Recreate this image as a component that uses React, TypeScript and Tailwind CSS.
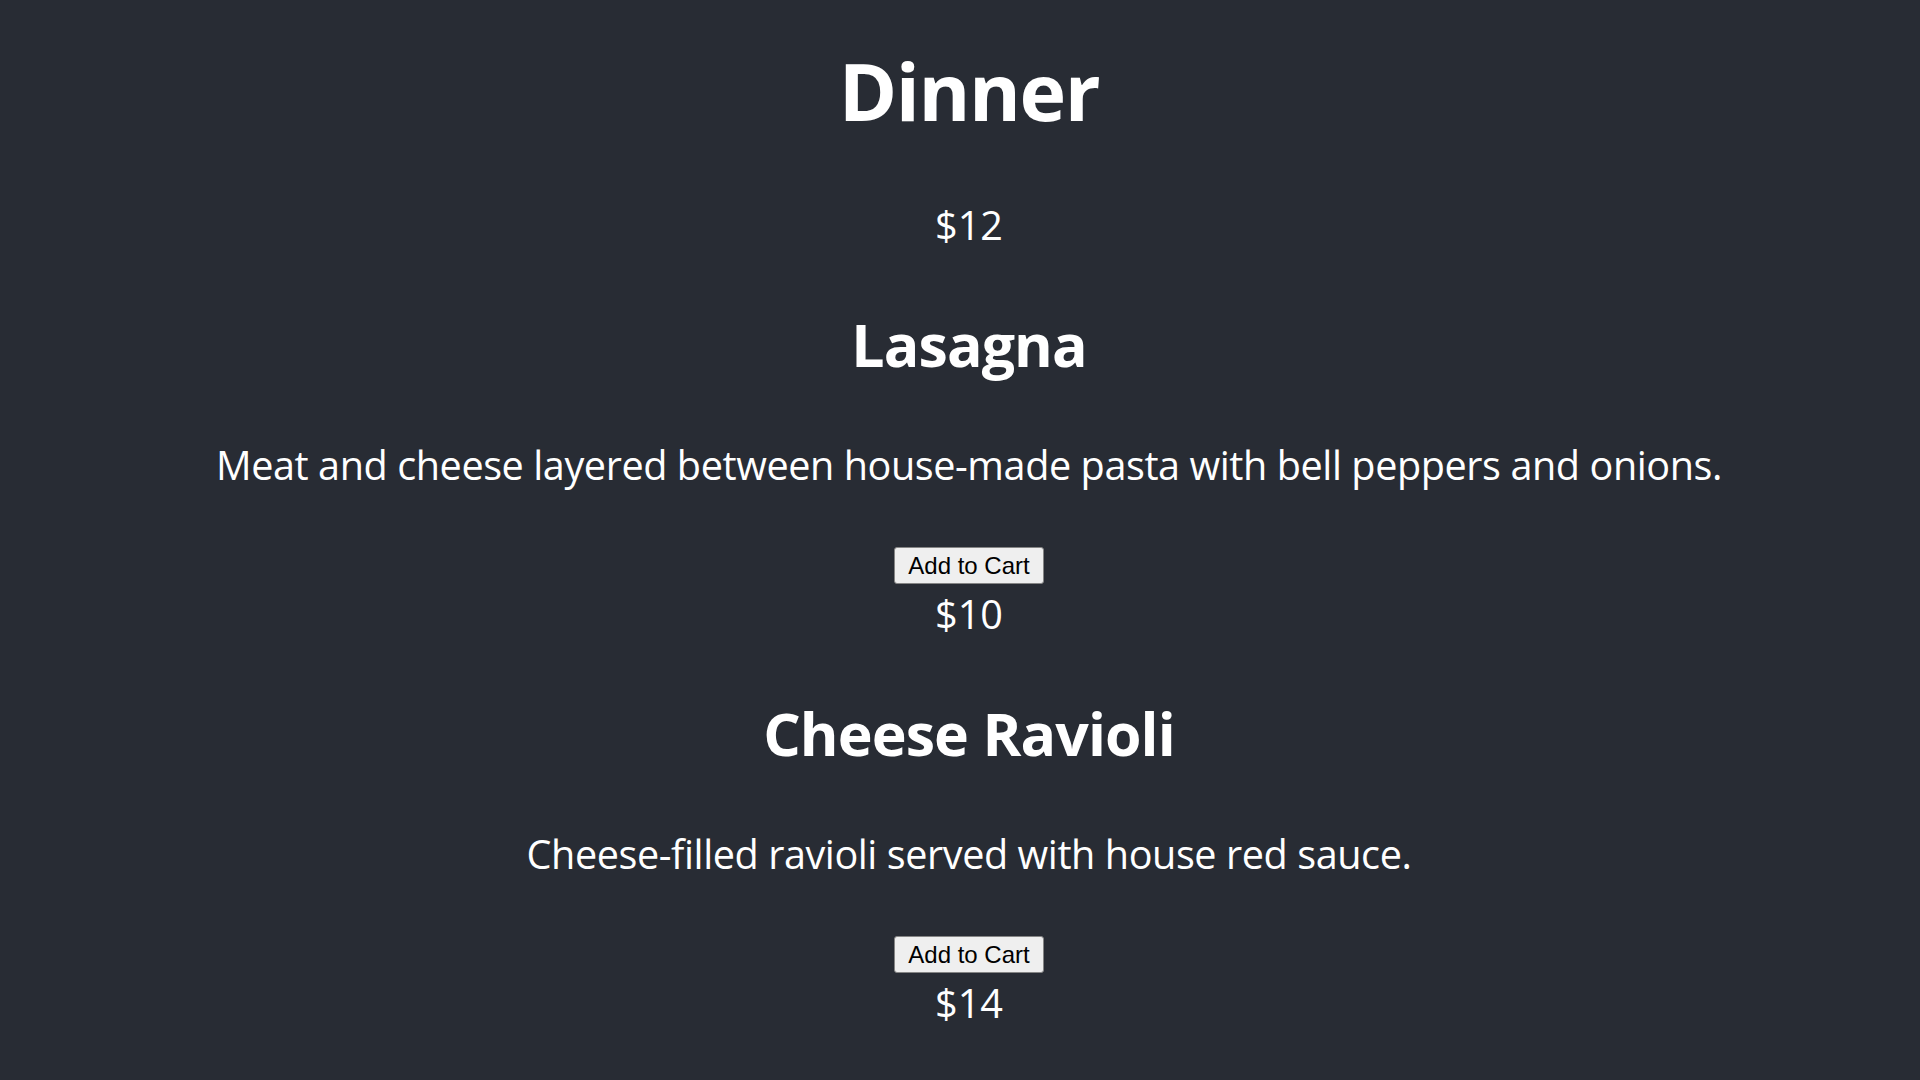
const items = [
  {
    name: "Lasagna",
    description:
      "Meat and cheese layered between house-made pasta with bell peppers and onions.",
    price: "$10",
  },
  {
    name: "Cheese Ravioli",
    description: "Cheese-filled ravioli served with house red sauce.",
    price: "$14",
  },
];

function MenuItem({ item }: { item: (typeof items)[number] }) {
  return (
    <div className="flex flex-col items-center">
      <h2 className="mt-[54px] text-[59px] leading-[80px] font-bold tracking-[-0.9px]">{item.name}</h2>
      <p className="mt-[53.5px] text-[39.6px] leading-[54px] tracking-[-0.42px]">{item.description}</p>
      <button className="mt-[55.5px] rounded-[3px] border border-[#858585] bg-[#efefef] px-[13px] py-[4px] font-['Liberation_Sans',Arial,sans-serif] text-[24px] leading-[27px] text-black">
        Add to Cart
      </button>
      <p className="mt-[5px] text-[39.6px] leading-[50px]">{item.price}</p>
    </div>
  );
}

export default function App() {
  return (
    <div className="min-h-screen bg-[#282c34] pl-[18px] text-white font-['Open_Sans',sans-serif]">
      <div className="flex flex-col items-center text-center">
        <h1 className="mt-[37px] text-[79px] leading-[108px] font-bold tracking-[-1.4px]">Dinner</h1>
        <p className="mt-[55px] text-[39.6px] leading-[50px]">$12</p>
        {items.map((item) => (
          <MenuItem key={item.name} item={item} />
        ))}
      </div>
    </div>
  );
}
